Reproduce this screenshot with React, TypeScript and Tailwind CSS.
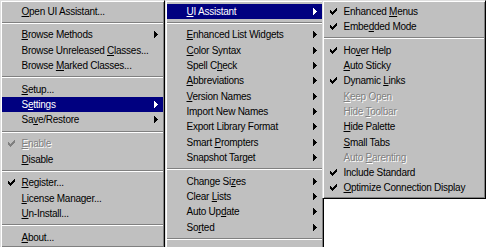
import clsx from "clsx";

type Entry =
  | { label: string; u?: number; check?: boolean; arrow?: boolean; off?: boolean; on?: boolean }
  | "sep";

const main: Entry[] = [
  { label: "Open UI Assistant...", u: 0 },
  "sep",
  { label: "Browse Methods", u: 0, arrow: true },
  { label: "Browse Unreleased Classes...", u: 18 },
  { label: "Browse Marked Classes...", u: 7 },
  "sep",
  { label: "Setup...", u: 0 },
  { label: "Settings", u: 1, arrow: true, on: true },
  { label: "Save/Restore", u: 2, arrow: true },
  "sep",
  { label: "Enable", u: 0, check: true, off: true },
  { label: "Disable", u: 0 },
  "sep",
  { label: "Register...", u: 0, check: true },
  { label: "License Manager...", u: 0 },
  { label: "Un-Install...", u: 0 },
  "sep",
  { label: "About...", u: 0 },
];

// the last row runs past the bottom of the shot, only its top edge shows
const settings: Entry[] = [
  { label: "UI Assistant", u: 0, arrow: true, on: true },
  "sep",
  { label: "Enhanced List Widgets", u: 0, arrow: true },
  { label: "Color Syntax", u: 0, arrow: true },
  { label: "Spell Check", u: 7, arrow: true },
  { label: "Abbreviations", u: 0, arrow: true },
  { label: "Version Names", u: 0, arrow: true },
  { label: "Import New Names", arrow: true },
  { label: "Export Library Format", arrow: true },
  { label: "Smart Prompters", u: 6, arrow: true },
  { label: "Snapshot Target", arrow: true },
  "sep",
  { label: "Change Sizes", u: 9, arrow: true },
  { label: "Clear Lists", u: 6, arrow: true },
  { label: "Auto Update", u: 7, arrow: true },
  { label: "Sorted", u: 2, arrow: true },
  "sep",
  { label: "" },
];

const assistant: Entry[] = [
  { label: "Enhanced Menus", u: 9, check: true },
  { label: "Embedded Mode", u: 4, check: true },
  "sep",
  { label: "Hover Help", u: 2, check: true },
  { label: "Auto Sticky", u: 0 },
  { label: "Dynamic Links", u: 8, check: true },
  { label: "Keep Open", u: 0, off: true },
  { label: "Hide Toolbar", u: 5, off: true },
  { label: "Hide Palette", u: 0 },
  { label: "Small Tabs", u: 0 },
  { label: "Auto Parenting", u: 5, off: true },
  { label: "Include Standard", check: true },
  { label: "Optimize Connection Display", u: 0, check: true },
];

function Check({ color }: { color: string }) {
  return (
    <svg width="7" height="7" viewBox="0 0 7 7" shapeRendering="crispEdges" fill={color}>
      <rect x="6" y="0" width="1" height="1" />
      <rect x="5" y="1" width="2" height="1" />
      <rect x="0" y="2" width="1" height="1" />
      <rect x="4" y="2" width="3" height="1" />
      <rect x="0" y="3" width="2" height="1" />
      <rect x="3" y="3" width="3" height="1" />
      <rect x="0" y="4" width="5" height="1" />
      <rect x="1" y="5" width="3" height="1" />
      <rect x="2" y="6" width="1" height="1" />
    </svg>
  );
}

function Arrow({ color }: { color: string }) {
  return (
    <svg width="4" height="7" viewBox="0 0 4 7" shapeRendering="crispEdges" fill={color}>
      <rect x="0" y="0" width="1" height="7" />
      <rect x="1" y="1" width="1" height="5" />
      <rect x="2" y="2" width="1" height="3" />
      <rect x="3" y="3" width="1" height="1" />
    </svg>
  );
}

function Label({ text, u }: { text: string; u?: number }) {
  if (u === undefined) return <>{text}</>;
  return (
    <>
      {text.slice(0, u)}
      <u className="underline underline-offset-[1px]">{text[u]}</u>
      {text.slice(u + 1)}
    </>
  );
}

function Menu({ items, className }: { items: Entry[]; className?: string }) {
  return (
    <div
      className={clsx(
        "flex flex-col bg-[#c0c0c0] border border-[#dfdfdf] border-r-black border-b-black px-px pt-[2.5px] pb-[2.5px] shadow-[inset_1px_1px_0_#fff,inset_-1px_-1px_0_#808080]",
        className,
      )}
    >
      {items.map((it, i) => {
        if (it === "sep")
          return (
            <div key={i} className="flex h-[8.5px] flex-col justify-center">
              <div className="h-px bg-[#808080]" />
              <div className="h-px bg-white" />
            </div>
          );
        const fg = it.on ? "#fff" : it.off ? "#808080" : "#000";
        return (
          <div
            key={i}
            className={clsx(
              "flex h-[15.3px] shrink-0 items-center whitespace-nowrap",
              it.on ? "bg-[#000080] text-white" : it.off ? "text-[#808080] [text-shadow:1px_1px_0_#fff]" : "text-black",
            )}
          >
            <span className="flex w-[19.5px] shrink-0 pl-[6px]">{it.check && <Check color={fg} />}</span>
            <span className="flex-1">
              <Label text={it.label} u={it.u} />
            </span>
            {it.arrow && (
              <span className="mr-[5px] flex">
                <Arrow color={fg} />
              </span>
            )}
          </div>
        );
      })}
    </div>
  );
}

export default function App() {
  return (
    <div className="relative h-[247px] w-[486px] overflow-hidden bg-white font-['Liberation_Sans',Arial,sans-serif] text-[10px] tracking-[-0.25px]">
      <Menu items={main} className="w-[165px]" />
      <Menu items={settings} className="absolute left-[165px] top-0 w-[159px]" />
      <Menu items={assistant} className="absolute left-[322px] top-0 w-[164px]" />
    </div>
  );
}
